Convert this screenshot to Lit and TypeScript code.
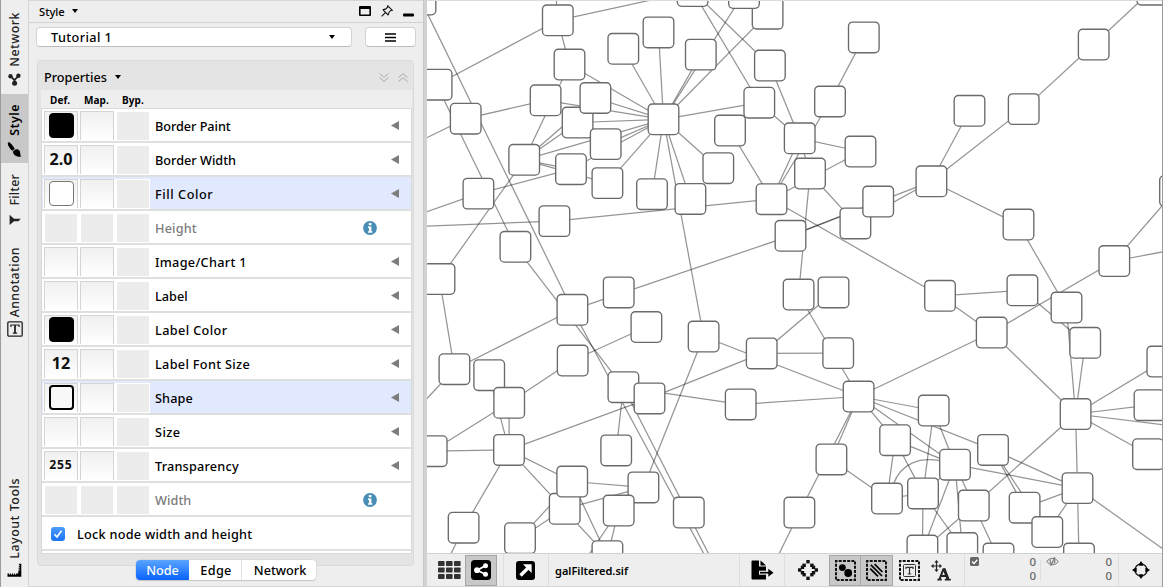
import { LitElement, html, svg, css, nothing } from "lit";
import { customElement, property } from "lit/decorators.js";
import { classMap } from "lit/directives/class-map.js";

type Point = [number, number];

/* Node centres, in paint order: later nodes cover earlier ones. */
const NODES: Record<string, Point> = {
  n27: [420.5, -0.5], n26: [436.6, 84.7], n28: [439.5, 279], n25: [465.7, 118.7],
  n1: [557.8, 20.3], n2: [569.5, 64.5], n3: [623.3, 48.8], n4: [658.5, 32.4], n5: [700.8, 54.6],
  n6: [692.6, -9], n8: [767.6, 13.7], n7: [744, -7], n9: [769.9, 65.5],
  n11: [730, 130.5], n10: [759.3, 102.7], n12: [718.3, 168.2], n13: [690.4, 198.9], n14: [652, 194.2],
  n15: [607.4, 183.1], n16: [571, 169.2], n18: [577.6, 122.5], n20: [545.6, 100.3], n19: [595.4, 98],
  n17: [605.7, 144.1], n21: [524.2, 159.8], n22: [478.4, 193.6], n23: [554.4, 221.1], n24: [515.4, 246.8],
  hub: [663.5, 119.3], n30: [771.5, 199.2], n31: [790.5, 235.8], n32: [799.7, 138.3], n33: [810, 173.5],
  n34: [860.5, 151.5], n35: [830, 101.5], n36: [863.8, 37.4], n37: [969.5, 110.8], n38: [1023.7, 109.1],
  n39: [1093.7, 44.5], n40: [1152.3, -10.3], n41: [931.4, 181.3], n43: [855.4, 223.4], n42: [878.2, 201.5],
  n44: [1018.5, 224.5], n45: [1114.3, 261], n46: [1175, 191],
  m1: [572.4, 309.8], m2: [618.7, 292.4], m3: [646.4, 327], m4: [572.7, 360.5], m5: [454.4, 369.2],
  m6: [489.2, 375.2], m7: [509.2, 402.8], m8: [509, 449.9], m9: [431.7, 451.2], m10: [623.4, 387.2],
  m11: [649.5, 398.4], m12: [616.2, 450.4], m13: [703.6, 336.5], m14: [761.7, 353.4], m15: [740.7, 404.4],
  m17: [564.7, 508.8], m16: [572.2, 481.5], m18: [643.4, 487.4], m19: [618.7, 510.5], m20: [688.8, 512.5],
  m21: [463.6, 527.7], m22: [520, 538.2], m23: [607.4, 556.2],
  p1: [798.6, 294.5], p2: [833.5, 292.4], p3: [940, 295.8], p4: [1022.4, 290.3], p5: [1066.5, 307.5],
  p6: [1085.2, 342.8], p7: [991.7, 332.5], p8: [838.2, 353.1], p9: [858.6, 396.5], p10: [933.7, 410.5],
  p11: [895.1, 440.2], p13: [993, 449.9], p14: [831.4, 459.4], p15: [887, 498.5], p12: [955, 464.7],
  p16: [923, 493.4], p17: [973.8, 505.5], p18: [1024.6, 507.7], p19: [1047.3, 532], p20: [1077.5, 488.1],
  p21: [1075.6, 414], p22: [1162.3, 361.5], p23: [1149.5, 405.2], p24: [1148, 454.2], p25: [799.4, 512.5],
  p26: [922.4, 550.5], p27: [962.3, 548], p28: [998.5, 558.5], p29: [1079, 558.5],
};

const EDGES = `n1-n2 n1-n26 n1-n6 n27-m1 n26-n24 n24-m10 n25-n20 n2-n21 n2-hub n19-hub n20-hub n18-hub
n17-hub n16-hub n15-hub n21-hub n21-n19 n21-n18 n21-n16 n21-n15 n22-n16 n21-n28 n23-n30 n3-hub n4-hub
n5-hub n7-hub n8-hub n10-hub n12-hub n14-hub n13-hub hub-m13 n6-n10 n6-n9 n9-n32 n10-n32 n11-n30 n30-n32
n35-n30 n30-n34 n36-n35 n32-n34 n32-n33 n33-n43 n33-p1 n31-n41 n31-n42 n43-n41 n30-p3 n41-n37 n41-n38
n41-n44 n38-n39 n39-n40 n44-p5 n46-n45 n45-p7 n31-m1 n28-m5 m5-m1 m4-m7 m3-m4 m6-m8 m7-m8 m7-m9 m9-m8
m8-m11 m8-m21 m8-m16 m8-m23 m16-m18 m17-m18 m16-m23 m16-m22 m17-m22 m19-m23 m13-m18 m12-m10 m11-m14
m10-m15 m15-p9 m13-p9 m14-p8 m14-p2 p1-p9 p3-p4 p3-p7 p4-p6 p5-p21 p6-p21 p7-p21 p7-p9 p21-p22 p21-p23
p21-p24 p21-p17 p21-p20 p20-p29 p20-p18 p20-p19 p20-p12 p20-p13 p13-p18 p13-p19 p9-p13 p9-p10 p9-p12
p9-p11 p9-p14 p9-p25 p14-p15 p11-p12 p11-p15 p11-p16 p16-p27 p10-p16 p10-p12 p12-p16 p15-p16 p12-p17
p12-p26 p12-p27 p16-p26 p17-p26 p17-p28`.split(/\s+/);

/* Edges whose far end lies outside the visible part of the canvas. */
const OPEN_EDGES: [string, Point][] = [
  ["n1", [554, -30]], ["n25", [420, 141]], ["n22", [420, 214]], ["n23", [420, 226.5]],
  ["m1", [718, 580]], ["m10", [720, 576]], ["n45", [1170, 250.5]], ["m5", [420, 406]],
  ["m21", [448, 560]], ["m19", [584, 562]], ["p21", [1170, 425.5]], ["p20", [1170, 554]],
  ["p26", [890, 567]], ["p25", [776, 560]],
];

@customElement("network-view")
class NetworkView extends LitElement {
  static styles = css`
    :host { display: block; overflow: hidden; background: #fff; border-top: 1px solid #dcdcdc; }
    svg { display: block; }
    .edge { stroke: #000; stroke-opacity: 0.42; stroke-width: 1.25; fill: none; }
    .node { fill: #fff; stroke: #6a6a6a; stroke-width: 1.35; }
  `;
  render() {
    return html`<svg width="736" height="552" viewBox="427 1 736 552">
      ${EDGES.map((e) => {
        const [a, b] = e.split("-").map((k) => NODES[k]);
        return svg`<line class="edge" x1=${a[0]} y1=${a[1]} x2=${b[0]} y2=${b[1]} />`;
      })}
      ${OPEN_EDGES.map(([k, p]) => svg`<line class="edge" x1=${NODES[k][0]} y1=${NODES[k][1]} x2=${p[0]} y2=${p[1]} />`)}
      <path class="edge" d="M940 460.7C920 457 901 463 893.5 484" />
      ${Object.values(NODES).map(([x, y]) => svg`<rect class="node" x=${x - 15.3} y=${y - 15.3} width="30.6" height="30.6" rx="4.2" />`)}
    </svg>`;
  }
}

@customElement("property-row")
class PropertyRow extends LitElement {
  @property() name = "";
  @property() def = "empty";
  @property({ type: Number }) tracking = 0;
  @property({ type: Boolean }) selected = false;

  static styles = css`
    :host { display: block; height: 34px; box-sizing: border-box; border-bottom: 2px solid #dfdfdf; }
    .row { display: flex; height: 32px; align-items: center; background: #fff; padding-left: 1px; }
    .row.selected { background: #e1e9ff; }
    .cells { display: flex; align-self: stretch; background: #fff; padding: 1px 0 1px 1px; gap: 2px; }
    .selected .cells { box-shadow: inset 0 2px #e1e9ff; }
    .cell {
      width: 34px; box-sizing: border-box; border: 1px solid #d4d4d4; border-bottom: 0; margin-top: 1px;
      background: linear-gradient(#f0f0f0, #fff); display: flex; align-items: center; justify-content: center;
      font: bold 16.2px/26px "Noto Sans", "Open Sans", sans-serif; color: #111;
    }
    .cell.small { font-size: 12.2px; letter-spacing: 0.8px; }
    .cell.off { background: #ececec; border: 1px solid #fff; border-bottom: 0; }
    .swatch { width: 25px; height: 25px; box-sizing: border-box; border-radius: 4px; border: 1px solid #777; background: #fff; margin-bottom: 2px; }
    .swatch.black { background: #000; border-color: #000; }
    .swatch.shape { border: 2px solid #000; background: #f8f8f8; }
    .value { margin-bottom: 2px; }
    .name { flex: 1; padding: 1px 0 0 5px; font: 500 12.7px "Noto Sans", "Open Sans", sans-serif; color: #000; white-space: nowrap; }
    .disabled .name { color: #7c7c7c; }
    .arrow { width: 8px; height: 9px; margin-right: 12px; fill: #7d7d7d; }
    .info { width: 14px; height: 14px; margin: 1px 34px 0 0; }
  `;
  render() {
    const off = this.def === "none";
    const isSwatch = ["black", "white", "shape"].includes(this.def);
    const content = isSwatch
      ? html`<div class=${"swatch " + this.def}></div>`
      : this.def === "empty" || off ? nothing : html`<span class="value">${this.def}</span>`;
    return html`<div class=${classMap({ row: true, selected: this.selected, disabled: off })}>
      <div class="cells">
        <div class=${classMap({ cell: true, off, small: this.def === "255" })}>${content}</div>
        <div class=${classMap({ cell: true, off })}></div>
        <div class="cell off"></div>
      </div>
      <div class="name" style="letter-spacing:${this.tracking}px">${this.name}</div>
      ${off
        ? html`<svg class="info" viewBox="0 0 14 14"><circle cx="7" cy="7" r="6.9" fill="#4a8db7"/><path fill="#fff" d="M5.8 2h2.6v2.3H5.8zM5 5.4h3.4v4.8h1v1.5H5v-1.5h1V6.9H5z"/></svg>`
        : html`<svg class="arrow" viewBox="0 0 8 9"><path d="M8 0v9L0 4.5z"/></svg>`}
    </div>`;
  }
}

/* name, default value, letter tracking, selected */
const ROWS: [string, string, number, boolean?][] = [
  ["Border Paint", "black", -0.05], ["Border Width", "2.0", 0], ["Fill Color", "white", 0.55, true],
  ["Height", "none", 0.15], ["Image/Chart 1", "empty", 0.3], ["Label", "empty", 0], ["Label Color", "black", 0.38],
  ["Label Font Size", "12", 0.32], ["Shape", "shape", 0.1, true], ["Size", "empty", 0.4],
  ["Transparency", "255", 0.2], ["Width", "none", 0.05],
];

@customElement("app-root")
class AppRoot extends LitElement {
  static styles = css`
    :host {
      display: grid; grid-template-columns: 29px 394px 4px 1fr; width: 1163px; height: 587px; overflow: hidden;
      box-sizing: border-box; background: #eee; color: #000; font: 500 12px "Noto Sans", "Open Sans", sans-serif;
    }
    svg { display: block; flex: none; }
    .rail { display: flex; flex-direction: column; border-left: 1px solid #9c9c9c; border-right: 1px solid #d4d4d4; box-sizing: border-box; }
    .tab { display: flex; flex-direction: column; align-items: center; gap: 6px; box-sizing: border-box; width: 27px; color: #222; }
    .tab.network { height: 94px; padding-top: 12px; }
    .tab.style { height: 69px; padding-top: 10px; background: #c8c8c8; color: #000; }
    .tab.filter { height: 75px; padding-top: 11px; gap: 8px; }
    .tab.annotation { height: 110px; padding-top: 9px; gap: 4px; }
    .tab.layout { margin-top: auto; height: 111px; padding-top: 2px; gap: 4px; }
    .label { writing-mode: vertical-rl; transform: rotate(180deg); font-size: 12.4px; line-height: 16px; white-space: nowrap; letter-spacing: 0.38px; }
    .network .label { letter-spacing: 0.5px; }
    .layout .label { letter-spacing: 0.55px; }
    .filter .label { letter-spacing: 0.2px; }
    .style .label { font-weight: 600; letter-spacing: 0.45px; }

    .panel { display: flex; flex-direction: column; border-top: 1px solid #d6d6d6; box-sizing: border-box; height: 587px; border-bottom: 1px solid #d6d6d6; }
    .title { display: flex; align-items: center; height: 22px; box-sizing: border-box; border-bottom: 1px solid #d2d2d2; padding: 0 9px 1px 10px; font-size: 11.2px; }
    .title .caret { margin-left: 7px; }
    .window { margin-left: auto; display: flex; align-items: center; gap: 10px; }
    .pick { display: flex; gap: 13px; padding: 4px 7px 0; }
    .combo, .menu { height: 20px; box-sizing: border-box; background: #fff; border: 1px solid #d4d4d4; border-bottom-color: #bcbcbc; border-radius: 4px; display: flex; align-items: center; }
    .combo { width: 316px; padding: 0 16px 0 14px; justify-content: space-between; font-size: 12.7px; letter-spacing: 0.4px; }
    .menu { width: 51px; justify-content: center; }

    .properties { margin: 13px 9px 0 8px; height: 506px; box-sizing: border-box; background: #e4e4e4; border: 1px solid #dadada; border-radius: 4px; padding: 0 1px 0 3px; flex: none; }
    .bar { display: flex; align-items: center; height: 29px; padding: 3px 4px 0 3px; box-sizing: border-box; font-size: 12.7px; }
    .bar .caret { margin-left: 8px; }
    .chevrons { margin-left: auto; display: flex; gap: 9px; }
    .heads { display: flex; background: #eee; height: 18px; padding: 3px 0 0 9px; box-sizing: border-box; font-weight: 700; font-size: 10px; line-height: 15px; letter-spacing: 0.1px; }
    .heads span:nth-child(1) { width: 34px; }
    .heads span:nth-child(2) { width: 38px; }
    .list { border: 1px solid #d8d8d8; background: #fff; height: 446px; box-sizing: border-box; width: 371px; }
    .lock { display: flex; align-items: center; height: 34px; box-sizing: border-box; border-bottom: 2px solid #e0e0e0; padding: 1px 0 0 9px; gap: 12px; font-size: 12.7px; letter-spacing: 0.26px; }
    .check { width: 14px; height: 14px; border-radius: 3px; background: linear-gradient(#4d9bff, #1a73f5); }

    .segments { display: flex; position: relative; margin: -6px 0 0 107px; width: 180px; height: 20px; border-radius: 4px; background: #fff; box-shadow: 0 0 0 0.5px #cfcfcf, 0 1px 1px #c0c0c0; font-size: 12.7px; line-height: 20px; text-align: center; overflow: hidden; flex: none; }
    .segments div:nth-child(1) { width: 53px; background: linear-gradient(#5aa5ff, #0a62fb); color: #fff; }
    .segments div:nth-child(2) { width: 53px; border-right: 1px solid #e2e2e2; box-sizing: border-box; padding-left: 2px; letter-spacing: 0.3px; }
    .segments div:nth-child(3) { flex: 1; padding-left: 2px; }

    .split { background: #d2d2d2; border-left: 1px solid #c8c8c8; box-sizing: border-box; }

    .main { display: flex; flex-direction: column; min-width: 0; border-right: 1px solid #9a9a9a; }
    network-view { height: 553px; box-sizing: border-box; flex: none; }
    .toolbar { display: flex; flex: 1; border-top: 1px solid #d0d0d0; border-bottom: 1px solid #d6d6d6; box-sizing: border-box; align-items: center; }
    .tool { display: flex; flex: none; align-items: center; justify-content: center; width: 32px; height: 32px; box-sizing: border-box; }
    .on { background: #c8c8c8; border: 1px solid #a6a6a6; height: 31px; }
    .on + .on { border-left: 0; }
    .tool.grid { width: 38px; padding-left: 7px; }
    .tool.detach { width: 44px; padding-right: 1px; margin-left: 0; }
    .tool.export { width: 44px; padding-left: 1px; }
    .tool.arrange { width: 44px; padding-left: 1px; }
    .tool.target { width: 44px; }
    .sep { width: 1px; height: 32px; background: #dedede; flex: none; }
    .sep.short { height: 20px; margin-left: 4px; }
    .sep.gap { margin-left: 6px; }
    .file { width: 190px; flex: none; padding-left: 6px; box-sizing: border-box; font: 600 11px "Noto Sans", "Open Sans", sans-serif; }
    .count { display: flex; flex: none; justify-content: space-between; width: 71px; height: 30px; padding-left: 5px; box-sizing: border-box; font-size: 11.5px; line-height: 14px; color: #666; }
    .count svg { margin-top: 2px; }
    .nums { display: flex; flex-direction: column; }
  `;

  private caret() {
    return html`<svg class="caret" width="6" height="4"><path d="M0 0h6L3 4z"/></svg>`;
  }

  private dashed(inner: unknown) {
    return html`<svg width="21" height="21" viewBox="0 0 21 21">
      <rect x="1" y="1" width="19" height="19" fill="none" stroke="#111" stroke-width="2" stroke-dasharray="3 1.22" stroke-dashoffset="1.5"/>${inner}</svg>`;
  }

  private rail() {
    return html`<nav class="rail">
      <div class="tab network"><span class="label">Network</span>
        <svg width="13" height="13" viewBox="0 0 13 13" fill="#222"><path d="M2.6 3.2L6.4 7.2L10.4 3M6.5 7v3" stroke="#222" stroke-width="1.8" fill="none"/><circle cx="2.5" cy="3.2" r="2.2"/><circle cx="10.4" cy="2.8" r="2.2"/><circle cx="6.6" cy="10.2" r="2.5"/></svg></div>
      <div class="tab style"><span class="label">Style</span>
        <svg width="15" height="15" viewBox="0 0 15 15"><path d="M.8 1.2C.9 .2 2.2 0 3 .8C5 2.8 6.9 5 7.8 6.9L5.2 8.7C3.6 7.6 .5 3.6 .8 1.2zM8.4 7.6C10.8 6.6 13 8.2 13.2 10.4C13.3 12.2 13.2 13.4 14.4 14.6C10.8 15.2 6.2 13.6 5.9 9.4z"/></svg></div>
      <div class="tab filter"><span class="label">Filter</span>
        <svg width="12" height="12" viewBox="0 0 12 12" fill="#222"><path d="M.6 .8V11L5 7.2H9.5L11.7 4.8H5z"/></svg></div>
      <div class="tab annotation"><span class="label">Annotation</span>
        <svg width="16" height="16" viewBox="0 0 16 16" fill="none" stroke="#222"><rect x=".8" y=".8" width="14.4" height="14.4" rx="1.2" stroke-width="1.3"/><path d="M3.9 6V4H12.1V6M5.8 12.2H10.2" stroke-width="1.2"/><path d="M8 4V12.2" stroke-width="1.8"/></svg></div>
      <div class="tab layout"><span class="label">Layout Tools</span>
        <svg width="15" height="15" viewBox="0 0 15 15"><path d="M.5 13.8V10.5H11.2L12 .8H14.3V13.8z"/><path d="M2.6 10v1.8M4.6 10v1.8M6.6 10v1.8M8.6 10v1.8M11 2.6h1.8M11 4.8h1.8M11 7h1.8" stroke="#eee" stroke-width=".9"/></svg></div>
    </nav>`;
  }

  private toolbar() {
    return html`<footer class="toolbar">
      <div class="tool grid">
        <svg width="23" height="18" viewBox="0 0 23 18" fill="#333">${[0, 1, 2].map((r) => [0, 1, 2].map((c) => svg`<rect x=${c * 8} y=${r * 6.5} width="6.6" height="5" rx=".8"/>`))}</svg></div>
      <div class="tool on">
        <svg width="20" height="20" viewBox="0 0 20 20"><rect width="20" height="20" rx="3.5"/><path d="M14.5 5.5L6.5 10.3L14.5 14.5" stroke="#fff" stroke-width="1.8" fill="none"/><circle cx="14.5" cy="5.8" r="2.5" fill="#fff"/><circle cx="14.5" cy="14.3" r="2.5" fill="#fff"/><circle cx="6" cy="10.2" r="2.9" fill="#fff"/></svg></div>
      <div class="sep gap"></div>
      <div class="tool detach">
        <svg width="19" height="19" viewBox="0 0 19 19"><rect width="19" height="19" rx="3"/><path d="M4.5 14.5L12 7" stroke="#fff" stroke-width="3.4"/><path d="M7 3.3H15.6V12z" fill="#fff"/></svg></div>
      <div class="sep"></div>
      <div class="file">galFiltered.sif</div>
      <div class="sep"></div>
      <div class="tool export">
        <svg width="23" height="20" viewBox="0 0 23 20"><path d="M1.5 .5H8V6.5H15V19.5H1.5Q.5 19.5 .5 18.5V1.5Q.5 .5 1.5 .5zM9.5 .5L15 5.4H9.5z"/><path d="M8 12.7H17" stroke="#eee" stroke-width="4"/><path d="M9 12.7H20" stroke="#000" stroke-width="1.7"/><path d="M17.3 8.7L22.5 12.7L17.3 16.7z"/></svg></div>
      <div class="sep"></div>
      <div class="tool arrange">
        <svg width="20" height="20" viewBox="0 0 20 20" fill="#111">${[[8.3, 0], [8.3, 16.6], [0, 8.3], [16.6, 8.3], [4.4, 3.6], [12.2, 3.6], [4.4, 13], [12.2, 13], [2.8, 5.6], [13.8, 5.6], [2.8, 11], [13.8, 11]].map(([x, y]) => svg`<rect x=${x} y=${y} width="3.4" height="3.4"/>`)}</svg></div>
      <div class="tool on">${this.dashed(svg`<circle cx="7.4" cy="7.6" r="3.4"/><circle cx="13.2" cy="13" r="3.9"/>`)}</div>
      <div class="tool on">${this.dashed(svg`<path d="M4.2 8.6L12 16.4M4.8 4.8L16 16M8.6 4.2L16.4 12" stroke="#000" stroke-width="1.7"/>`)}</div>
      <div class="tool">${this.dashed(svg`<rect x="4.5" y="4.5" width="12" height="12" rx="1" fill="none" stroke="#333"/><path d="M7 9V7.3H14V9M10.5 7.3V14M8.8 14H12.2" fill="none" stroke="#333" stroke-width="1.2"/>`)}</div>
      <div class="tool">
        <svg width="20" height="21" viewBox="0 0 20 21"><path d="M5.5 1.5V10.5M1 6H10" stroke="#222" stroke-width="1.2"/><path d="M5.5 0L7.7 2.6H3.3zM5.5 12L7.7 9.4H3.3zM0 6L2.5 3.8V8.2zM11 6L8.5 3.8V8.2z" fill="#222"/><path d="M6.4 19.6H10.8M13.8 19.6H19.8" fill="none" stroke="#222" stroke-width="1.8"/><path d="M8.4 19.5L12.6 8.6M12.6 8.5L16.9 19.5M10.3 15.9H15.5" fill="none" stroke="#222" stroke-width="2"/><path d="M13 8.5L17 19" stroke="#222" stroke-width="2.8"/></svg></div>
      <div class="sep" style="margin-left:7px"></div>
      <div class="count">
        <svg width="9" height="9" viewBox="0 0 9 9"><rect width="9" height="9" rx="1.5" fill="#666"/><path d="M2 4.5L4 6.5L7.3 2.7" fill="none" stroke="#fff" stroke-width="1.3"/></svg>
        <div class="nums"><span>0</span><span>0</span></div></div>
      <div class="sep short"></div>
      <div class="count">
        <svg width="13" height="9" viewBox="0 0 13 9" fill="none" stroke="#777"><path d="M.6 4.5Q3 1.3 6.5 1.3Q10 1.3 12.4 4.5Q10 7.7 6.5 7.7Q3 7.7 .6 4.5z"/><path d="M4.3 2.5Q3.5 5 5.2 6.5M8.5 2.5Q9.5 4.5 8 6.4M8.8 0L4.7 9" stroke-width="1.2"/></svg>
        <div class="nums"><span>0</span><span>0</span></div></div>
      <div class="sep gap"></div>
      <div class="tool target">
        <svg width="18" height="18" viewBox="0 0 18 18"><circle cx="9" cy="9" r="6" fill="none" stroke="#222" stroke-width="1.4"/><path d="M9 0L10.9 3V4.7H7.1V3zM9 18L10.9 15V13.3H7.1V15zM0 9L3 7.1H4.7V10.9H3zM18 9L15 7.1H13.3V10.9H15z"/></svg></div>
    </footer>`;
  }

  render() {
    return html`
      ${this.rail()}
      <section class="panel">
        <header class="title">Style ${this.caret()}
          <div class="window">
            <svg width="12" height="10" viewBox="0 0 12 10"><path fill-rule="evenodd" d="M1 0H11Q12 0 12 1V9Q12 10 11 10H1Q0 10 0 9V1Q0 0 1 0zM1.6 3V8.5H10.4V3z"/></svg>
            <svg width="12" height="12" viewBox="0 0 12 12" fill="none" stroke="#111" stroke-width="1.1"><path d="M6.8 .8L11.2 5.2L9.8 5.4L7.8 7.4Q8 9 7.1 9.9L2.1 4.9Q3 4 4.6 4.2L6.6 2.2zM4.4 7.6L.6 11.4"/></svg>
            <svg width="11" height="12" viewBox="0 0 11 12"><rect y="8.5" width="11" height="3" rx="1"/></svg>
          </div>
        </header>
        <div class="pick">
          <div class="combo"><span>Tutorial 1</span>${this.caret()}</div>
          <div class="menu"><svg width="11" height="9"><path d="M0 1H11M0 4.5H11M0 8H11" stroke="#000" stroke-width="1.7"/></svg></div>
        </div>
        <div class="properties">
          <div class="bar">Properties ${this.caret()}
            <div class="chevrons">
              <svg width="10" height="9" fill="none" stroke="#a8a8a8"><path d="M.5 .5L5 4.3L9.5 .5M.5 4.5L5 8.3L9.5 4.5"/></svg>
              <svg width="10" height="9" fill="none" stroke="#a8a8a8"><path d="M.5 4.5L5 .7L9.5 4.5M.5 8.5L5 4.7L9.5 8.5"/></svg>
            </div>
          </div>
          <div class="heads"><span>Def.</span><span>Map.</span><span>Byp.</span></div>
          <div class="list">
            ${ROWS.map(([name, def, tracking, sel]) => html`<property-row .name=${name} .def=${def} .tracking=${tracking} .selected=${!!sel}></property-row>`)}
            <div class="lock">
              <svg class="check" viewBox="0 0 14 14"><path d="M3.5 7.3L6 10L10.5 3.8" fill="none" stroke="#fff" stroke-width="1.7"/></svg>
              <span>Lock node width and height</span>
            </div>
          </div>
        </div>
        <div class="segments"><div>Node</div><div>Edge</div><div>Network</div></div>
      </section>
      <div class="split"></div>
      <section class="main">
        <network-view></network-view>
        ${this.toolbar()}
      </section>`;
  }
}
